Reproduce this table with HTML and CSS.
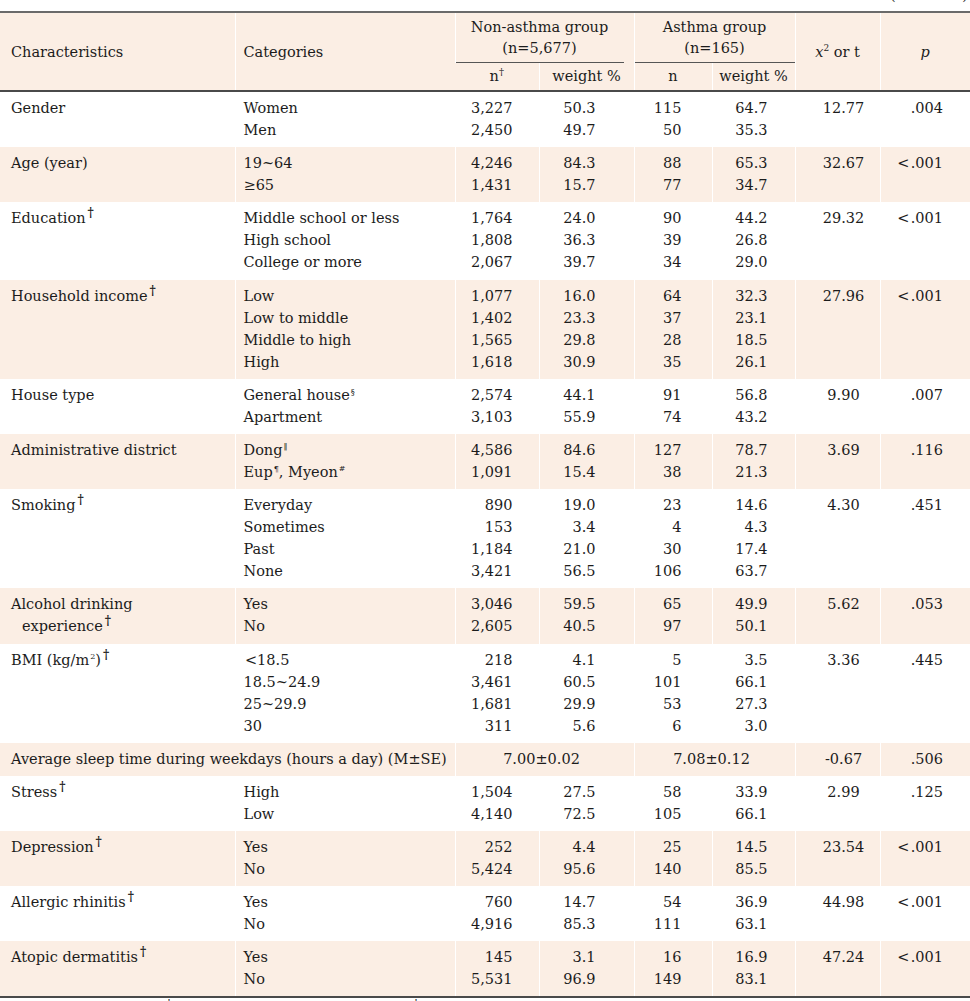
FILE: index.html
```html
<!DOCTYPE html>
<html>
<head>
<meta charset="utf-8">
<link rel="stylesheet" href="styles.css">
</head>
<body>
<div class="cont"><span>(</span><span>)</span></div>
<table class="tbl">
<colgroup>
<col class="c1"><col class="c2"><col class="c3"><col class="c4"><col class="c5"><col class="c6"><col class="c7"><col class="c8">
</colgroup>
<thead>
<tr class="h1">
<th rowspan="2" class="l">Characteristics</th>
<th rowspan="2" class="l cat">Categories</th>
<th colspan="2" class="grp"><div class="gl g1">Non-asthma group<br>(n=5,677)</div></th>
<th colspan="2" class="grp"><div class="gl">Asthma group<br>(n=165)</div></th>
<th rowspan="2" class="x2"><i>x</i><sup>2</sup> or t</th>
<th rowspan="2" class="pp"><i>p</i></th>
</tr>
<tr class="h2">
<th>n<sup class="dg">†</sup></th><th>weight %</th><th>n</th><th>weight %</th>
</tr>
</thead>
<tbody>
<tr>
<td>Gender</td><td>Women<br>Men</td>
<td class="n">3,227<br>2,450</td><td class="w">50.3<br>49.7</td><td class="n2">115<br>50</td><td class="w2">64.7<br>35.3</td><td class="x">12.77</td><td class="p">.004</td>
</tr>
<tr class="s">
<td>Age (year)</td><td>19~64<br>≥65</td>
<td class="n">4,246<br>1,431</td><td class="w">84.3<br>15.7</td><td class="n2">88<br>77</td><td class="w2">65.3<br>34.7</td><td class="x">32.67</td><td class="p">&lt;&#8202;.001</td>
</tr>
<tr>
<td>Education<sup class="bd">†</sup></td><td>Middle school or less<br>High school<br>College or more</td>
<td class="n">1,764<br>1,808<br>2,067</td><td class="w">24.0<br>36.3<br>39.7</td><td class="n2">90<br>39<br>34</td><td class="w2">44.2<br>26.8<br>29.0</td><td class="x">29.32</td><td class="p">&lt;&#8202;.001</td>
</tr>
<tr class="s">
<td>Household income<sup class="bd">†</sup></td><td>Low<br>Low to middle<br>Middle to high<br>High</td>
<td class="n">1,077<br>1,402<br>1,565<br>1,618</td><td class="w">16.0<br>23.3<br>29.8<br>30.9</td><td class="n2">64<br>37<br>28<br>35</td><td class="w2">32.3<br>23.1<br>18.5<br>26.1</td><td class="x">27.96</td><td class="p">&lt;&#8202;.001</td>
</tr>
<tr>
<td>House type</td><td>General house<sup class="sm">§</sup><br>Apartment</td>
<td class="n">2,574<br>3,103</td><td class="w">44.1<br>55.9</td><td class="n2">91<br>74</td><td class="w2">56.8<br>43.2</td><td class="x">9.90</td><td class="p">.007</td>
</tr>
<tr class="s">
<td>Administrative district</td><td>Dong<sup class="sm">‖</sup><br>Eup<sup class="sm">¶</sup>, Myeon<sup class="sm">#</sup></td>
<td class="n">4,586<br>1,091</td><td class="w">84.6<br>15.4</td><td class="n2">127<br>38</td><td class="w2">78.7<br>21.3</td><td class="x">3.69</td><td class="p">.116</td>
</tr>
<tr>
<td>Smoking<sup class="bd">†</sup></td><td>Everyday<br>Sometimes<br>Past<br>None</td>
<td class="n">890<br>153<br>1,184<br>3,421</td><td class="w">19.0<br>3.4<br>21.0<br>56.5</td><td class="n2">23<br>4<br>30<br>106</td><td class="w2">14.6<br>4.3<br>17.4<br>63.7</td><td class="x">4.30</td><td class="p">.451</td>
</tr>
<tr class="s">
<td>Alcohol drinking<br><span class="ind">experience<sup class="bd">†</sup></span></td><td>Yes<br>No</td>
<td class="n">3,046<br>2,605</td><td class="w">59.5<br>40.5</td><td class="n2">65<br>97</td><td class="w2">49.9<br>50.1</td><td class="x">5.62</td><td class="p">.053</td>
</tr>
<tr>
<td>BMI (kg/m<sup class="sm">2</sup>)<sup class="bd">†</sup></td><td>&#8202;&lt;18.5<br>18.5~24.9<br>25~29.9<br>30</td>
<td class="n">218<br>3,461<br>1,681<br>311</td><td class="w">4.1<br>60.5<br>29.9<br>5.6</td><td class="n2">5<br>101<br>53<br>6</td><td class="w2">3.5<br>66.1<br>27.3<br>3.0</td><td class="x">3.36</td><td class="p">.445</td>
</tr>
<tr class="s one">
<td colspan="2" class="wide">Average sleep time during weekdays (hours a day) (M±SE)</td>
<td colspan="2" class="m m1">7.00±0.02</td><td colspan="2" class="m m2">7.08±0.12</td><td class="x">-0.67</td><td class="p">.506</td>
</tr>
<tr>
<td>Stress<sup class="bd">†</sup></td><td>High<br>Low</td>
<td class="n">1,504<br>4,140</td><td class="w">27.5<br>72.5</td><td class="n2">58<br>105</td><td class="w2">33.9<br>66.1</td><td class="x">2.99</td><td class="p">.125</td>
</tr>
<tr class="s">
<td>Depression<sup class="bd">†</sup></td><td>Yes<br>No</td>
<td class="n">252<br>5,424</td><td class="w">4.4<br>95.6</td><td class="n2">25<br>140</td><td class="w2">14.5<br>85.5</td><td class="x">23.54</td><td class="p">&lt;&#8202;.001</td>
</tr>
<tr>
<td>Allergic rhinitis<sup class="bd">†</sup></td><td>Yes<br>No</td>
<td class="n">760<br>4,916</td><td class="w">14.7<br>85.3</td><td class="n2">54<br>111</td><td class="w2">36.9<br>63.1</td><td class="x">44.98</td><td class="p">&lt;&#8202;.001</td>
</tr>
<tr class="s">
<td>Atopic dermatitis<sup class="bd">†</sup></td><td>Yes<br>No</td>
<td class="n">145<br>5,531</td><td class="w">3.1<br>96.9</td><td class="n2">16<br>149</td><td class="w2">16.9<br>83.1</td><td class="x">47.24</td><td class="p">&lt;&#8202;.001</td>
</tr>
</tbody>
</table>
<div class="foot"><span class="f1">†</span><span class="f2">†</span></div>
</body>
</html>
```
FILE: styles.css
```css
html, body {
  margin: 0;
  padding: 0;
  background: #ffffff;
}
body {
  font-family: "DejaVu Serif", "Liberation Serif", serif;
  font-size: 14.5px;
  color: #1c1c1c;
  width: 970px;
  overflow: hidden;
}
.cont {
  height: 11px;
  position: relative;
  overflow: hidden;
}
.cont span {
  position: absolute;
  top: -16px;
  font-size: 15px;
  line-height: 22px;
}
.cont span:first-child { left: 890px; }
.cont span:last-child { left: 962px; }
.tbl {
  width: 970px;
  border-collapse: collapse;
  table-layout: fixed;
  border-top: 2px solid #6a6a6a;
  border-bottom: 2px solid #4a4a4a;
}
.c1 { width: 235px; }
.c2 { width: 220px; }
.c3 { width: 84px; }
.c4 { width: 95px; }
.c5 { width: 78px; }
.c6 { width: 83px; }
.c7 { width: 85px; }
.c8 { width: 90px; }
thead {
  background: #fbeee4;
  border-bottom: 2px solid #4a4a4a;
}
th {
  font-weight: normal;
  line-height: 21px;
  padding: 0;
  border-left: 1px solid #ffffff;
  text-align: center;
  vertical-align: middle;
}
th:first-child { border-left: none; }
th.l {
  text-align: left;
  padding-left: 11px;
  padding-top: 1px;
}
th.cat { padding-left: 8px; }
th.x2, th.pp { padding-top: 1px; }
.grp {
  padding-top: 4px;
  vertical-align: top;
}
.gl {
  border-bottom: 1px solid #555;
  padding-bottom: 3px;
}
.g1 { margin-right: 10px; }
.h2 th {
  height: 27px;
  vertical-align: middle;
}
sup {
  line-height: 0;
  font-size: 9px;
}
.dg { font-size: 10px; }
.bd {
  font-weight: bold;
  font-size: 12px;
  margin-left: 2px;
  vertical-align: 6px;
}
.sm { font-size: 8px; margin-left: 1px; }
td {
  line-height: 22px;
  padding-top: 5px;
  padding-bottom: 6.2px;
  padding-left: 0;
  padding-right: 0;
  vertical-align: top;
  border-left: 1px solid transparent;
  white-space: nowrap;
}
tr.s td { border-left-color: #ffffff; }
td:first-child {
  border-left: none;
  padding-left: 11px;
}
td:nth-child(2) { padding-left: 8px; }
tr.s { background: #fbeee4; }
tr.one td { padding-bottom: 6px; }
td.n { text-align: right; padding-right: 26px; }
td.w { text-align: right; padding-right: 38px; }
td.n2 { text-align: right; padding-right: 30px; }
td.w2 { text-align: right; padding-right: 27px; }
td.x { text-align: center; padding-left: 12px; }
td.p { text-align: right; padding-right: 27px; }
td.m { text-align: center; }
td.m1 { padding-right: 14px; }
td.m2 { padding-right: 6px; }
.ind { padding-left: 11px; }
.foot {
  position: relative;
  height: 10px;
  overflow: hidden;
}
.foot span {
  position: absolute;
  top: 0px;
  font-size: 12px;
  line-height: 14px;
}
.f1 { left: 166px; }
.f2 { left: 413px; }
```
